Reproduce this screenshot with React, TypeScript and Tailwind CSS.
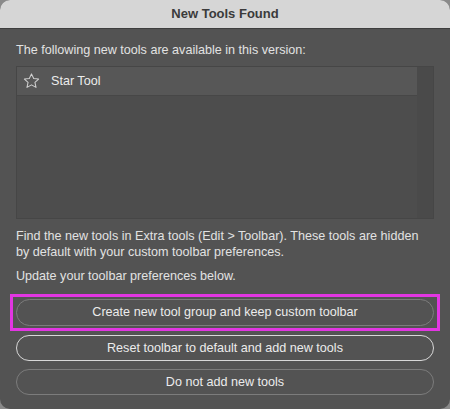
import React from "react";

function StarIcon() {
  return (
    <svg width="19" height="18" viewBox="0 0 24 24" fill="none" stroke="#cfcfcf" strokeWidth="1.4" strokeLinejoin="round">
      <path d="M12 2.5l2.9 6.2 6.6.7-4.9 4.5 1.4 6.6L12 17.2l-6 3.3 1.4-6.6-4.9-4.5 6.6-.7z" />
    </svg>
  );
}

export default function App() {
  return (
    <div className="w-[450px] h-[409px] bg-[#8a8a8a]" style={{ fontFamily: '"Liberation Sans", Arial, sans-serif' }}>
      <div className="w-[450px] h-[409px] rounded-[10px] overflow-hidden bg-[#535353] flex flex-col">
        <div className="h-[29px] shrink-0 bg-[#d6d6d6] border-b border-[#3e3e3e] flex items-center justify-center">
          <span className="text-[13px] font-bold text-[#3b3b3b]">New Tools Found</span>
        </div>
        <div className="flex flex-col px-4 pt-[13px]">
          <div className="text-[12.6px] leading-[16px] text-[#e2e2e2]">The following new tools are available in this version:</div>
          <div className="mt-[8px] h-[153px] border border-[#464646] bg-[#4d4d4d] flex">
            <div className="flex-1 flex flex-col">
              <div className="h-[29px] bg-[#575757] border-b border-[#474747] flex items-center pl-[5px] gap-[10px]">
                <StarIcon />
                <span className="text-[12.6px] text-[#ececec]">Star Tool</span>
              </div>
            </div>
            <div className="w-[16px] bg-[#4a4a4a]" />
          </div>
          <div className="mt-[9px] text-[12.6px] leading-[16px] text-[#e2e2e2]">
            Find the new tools in Extra tools (Edit &gt; Toolbar). These tools are hidden
            <br />
            by default with your custom toolbar preferences.
          </div>
          <div className="mt-[8px] text-[12.6px] leading-[16px] text-[#e2e2e2]">Update your toolbar preferences below.</div>
          <div className="mt-[10px] -mx-[6px] border-[3px] border-[#e236e2] px-[3px] py-[2px]">
            <button className="w-full h-[27px] rounded-full border border-[#7c7c7c] text-[12.6px] text-[#ececec] flex items-center justify-center">
              Create new tool group and keep custom toolbar
            </button>
          </div>
          <button className="mt-[4px] w-full h-[26px] rounded-full border-[1.5px] border-[#d8d8d8] text-[12.6px] text-[#ececec] flex items-center justify-center">
            Reset toolbar to default and add new tools
          </button>
          <button className="mt-[8px] w-full h-[26px] rounded-full border border-[#7c7c7c] text-[12.6px] text-[#ececec] flex items-center justify-center">
            Do not add new tools
          </button>
        </div>
      </div>
    </div>
  );
}
